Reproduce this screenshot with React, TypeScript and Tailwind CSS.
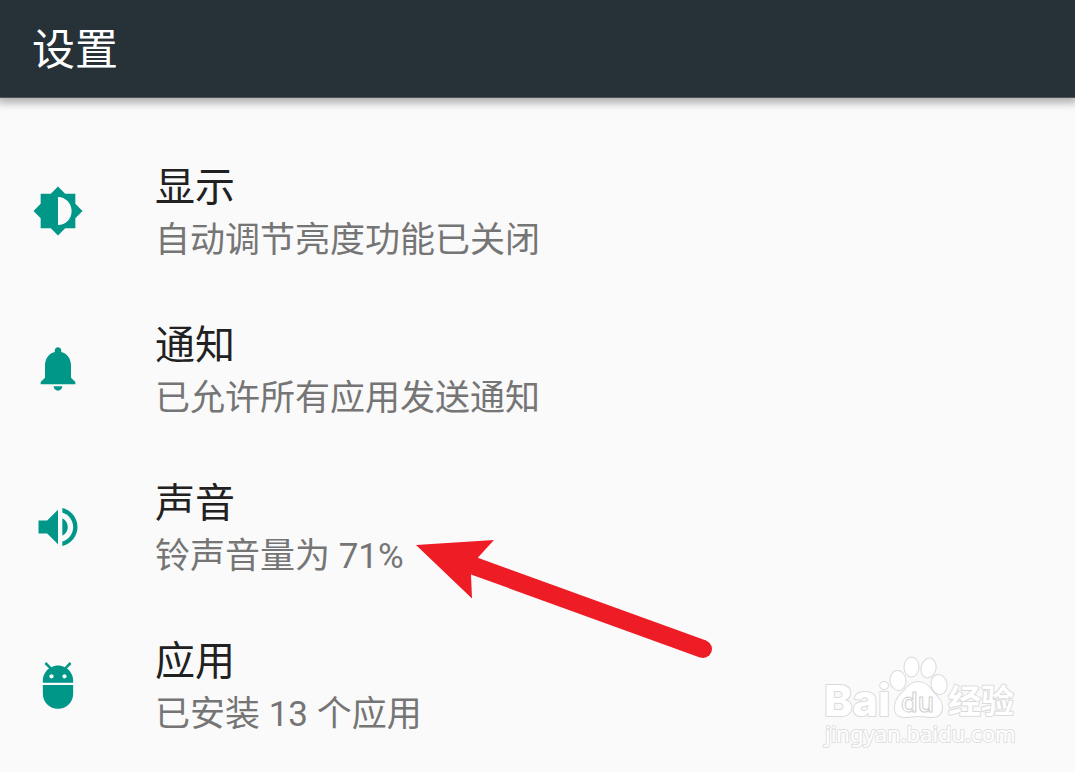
import type { ReactNode } from "react";

interface SettingItem {
  id: string;
  title: string;
  summary: string;
  icon: ReactNode;
  pointed?: boolean;
}

function Icon({ children }: { children: ReactNode }) {
  return (
    <svg className="w-[52px] h-[52px] shrink-0 text-[#009688]" viewBox="0 0 24 24" fill="currentColor" aria-hidden="true">
      {children}
    </svg>
  );
}

const items: SettingItem[] = [
  {
    id: "display",
    title: "显示",
    summary: "自动调节亮度功能已关闭",
    icon: (
      <Icon>
        <path d="M20 15.31L23.31 12 20 8.69V4h-4.69L12 .69 8.69 4H4v4.69L.69 12 4 15.31V20h4.69L12 23.31 15.31 20H20v-4.69zM12 18.5V5.5c3.5 0 6.3 2.9 6.3 6.5s-2.8 6.5-6.3 6.5z" />
      </Icon>
    ),
  },
  {
    id: "notifications",
    title: "通知",
    summary: "已允许所有应用发送通知",
    icon: (
      <Icon>
        <path d="M12 22c1.1 0 2-.9 2-2h-4c0 1.1.89 2 2 2zm6-6v-5.5c0-3.07-1.64-5.64-4.5-6.32V3.5c0-.83-.67-1.5-1.5-1.5s-1.5.67-1.5 1.5v.68C7.63 4.86 6 7.42 6 10.5V16l-2 2v1h16v-1l-2-2z" />
      </Icon>
    ),
  },
  {
    id: "sound",
    title: "声音",
    summary: "铃声音量为 71%",
    pointed: true,
    icon: (
      <Icon>
        <path d="M3 9v6h4l5 5V4L7 9H3zm13.5 3c0-1.77-1.02-3.29-2.5-4.03v8.05c1.48-.73 2.5-2.25 2.5-4.02zM14 3.23v2.06c2.89.86 5 3.54 5 6.71s-2.11 5.85-5 6.71v2.06c4.01-.91 7-4.49 7-8.77s-2.99-7.86-7-8.77z" />
      </Icon>
    ),
  },
  {
    id: "apps",
    title: "应用",
    summary: "已安装 13 个应用",
    icon: (
      <Icon>
        <path d="M5 16c0 3.87 3.13 7 7 7s7-3.13 7-7v-4H5v4zM16.12 4.37l2.1-2.1-.82-.83-2.3 2.31C14.16 3.28 13.12 3 12 3s-2.16.28-3.09.75L6.6 1.44l-.82.83 2.1 2.1C6.14 5.64 5 7.68 5 10v1h14v-1c0-2.32-1.14-4.36-2.88-5.63zM9 9c-.55 0-1-.45-1-1s.45-1 1-1 1 .45 1 1-.45 1-1 1zm6 0c-.55 0-1-.45-1-1s.45-1 1-1 1 .45 1 1-.45 1-1 1z" />
      </Icon>
    ),
  },
];

function RedArrow() {
  return (
    <svg className="absolute left-[410px] top-[82px] w-[310px] h-[136px] pointer-events-none" viewBox="410 530 310 136" aria-hidden="true">
      <path d="M416 545L494 540L478 557.5L471 575L472 598.5Z" fill="#ee1c25" />
      <path d="M474 566L703 649" stroke="#ee1c25" strokeWidth="18" fill="none" />
      <circle cx="703" cy="649" r="9" fill="#ee1c25" />
    </svg>
  );
}

function Watermark() {
  return (
    <svg
      className="absolute right-[55px] bottom-5 w-[200px] h-[100px] pointer-events-none"
      viewBox="820 652 200 100"
      fill="#ffffff"
      stroke="#dadada"
      strokeWidth="2"
      strokeLinejoin="round"
      paintOrder="stroke"
      role="img"
      aria-label="Baidu 经验"
    >
      <text x="824" y="716" fontSize="43" fontWeight="800" fontFamily="Inter, sans-serif">Bai</text>
      {/* paw */}
      <ellipse cx="898" cy="680.5" rx="7.5" ry="9.5" transform="rotate(-8 898 680.5)" />
      <ellipse cx="911.5" cy="667" rx="7" ry="9.5" />
      <ellipse cx="928.5" cy="668" rx="7" ry="9.5" transform="rotate(12 928.5 668)" />
      <ellipse cx="939" cy="684.5" rx="7.5" ry="9.5" transform="rotate(-12 939 684.5)" />
      <path d="M918 682C912 682 908 686 904 691C899 696 895 700 895 708C895 715 899 717 905 717C910 717 913 716 918 716C923 716 927 717 932 717C938 717 942 714 942 707C942 700 937 697 933 692C929 686 925 682 918 682Z" />
      <text x="901" y="712" fontSize="27" fontWeight="500" stroke="#cfcfcf" paintOrder="normal" strokeWidth="1" fontFamily="Inter, sans-serif">du</text>
      <text x="948" y="713" fontSize="33" fontWeight="700" fontFamily="'Noto Sans CJK SC', sans-serif">经验</text>
      <text x="825" y="742" fontSize="22" stroke="#e0e0e0" fontFamily="'Noto Sans', sans-serif">jingyan.baidu.com</text>
    </svg>
  );
}

export default function App() {
  return (
    <div className="relative min-h-screen overflow-x-hidden bg-[#fafafa] font-[Roboto,'Noto_Sans_CJK_SC',sans-serif]">
      <header className="flex items-center h-[98px] px-8 pt-0.5 bg-[#263238] border-b border-[#4a545a] shadow-[0_2px_8px_3px_rgba(0,0,0,0.3)]">
        <h1 className="text-[43px] leading-[56px] text-white">设置</h1>
      </header>

      <main className="pt-[34px]">
        <ul>
          {items.map((item) => (
            <li key={item.id} className="relative">
              <a href={`#${item.id}`} className="flex items-center gap-[71px] h-[158px] px-8">
                {item.icon}
                <div className="flex-1 pt-1">
                  <h2 className="text-[40px] leading-[56px] text-[#212121]">{item.title}</h2>
                  <p className="text-[35px] leading-[50px] text-[#757575]">{item.summary}</p>
                </div>
              </a>
              {item.pointed && <RedArrow />}
            </li>
          ))}
        </ul>
      </main>

      <Watermark />
    </div>
  );
}
